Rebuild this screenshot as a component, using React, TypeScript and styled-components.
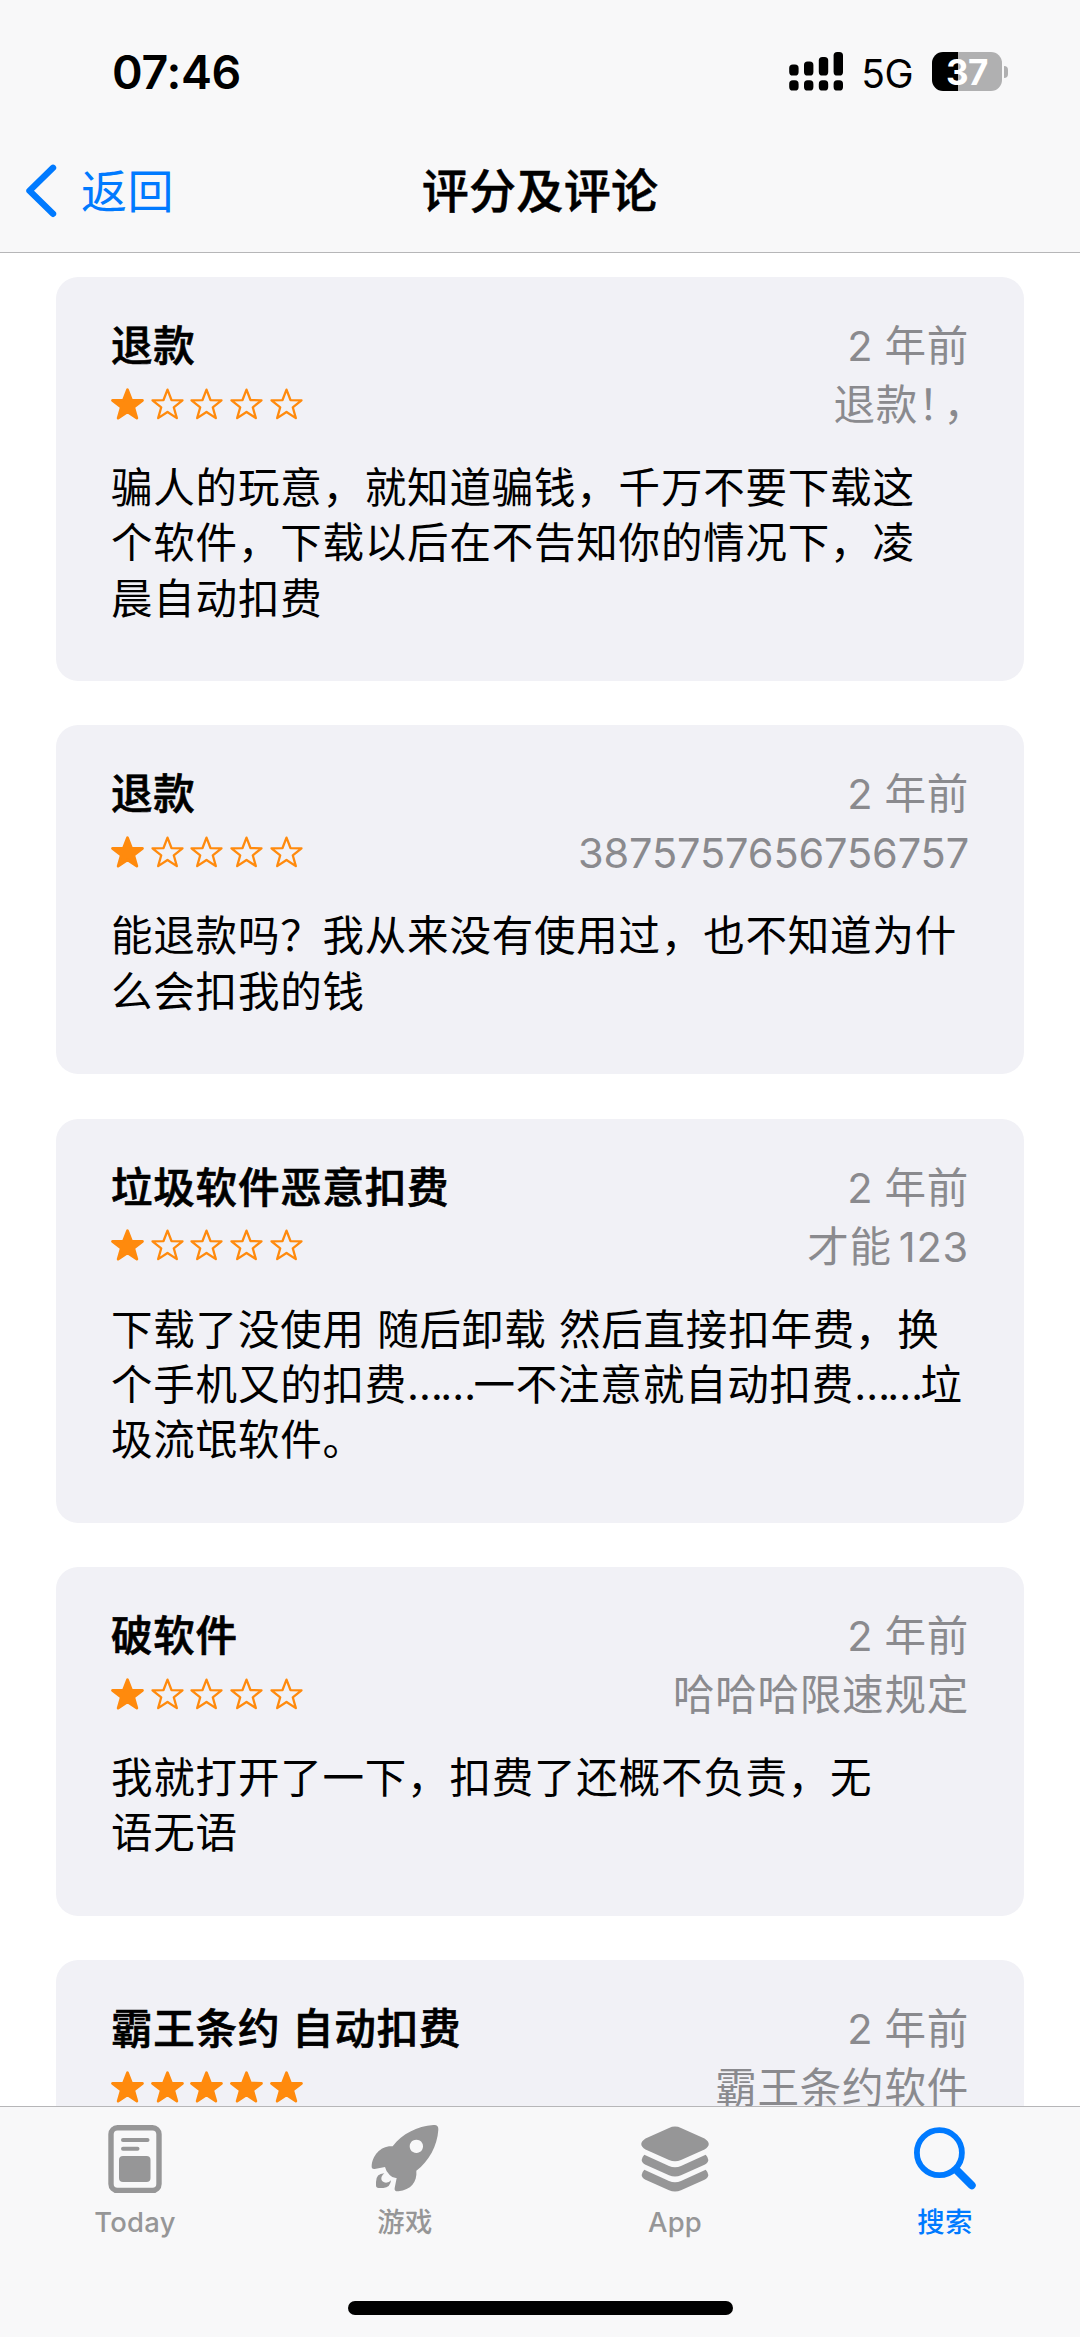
import React from 'react';
import styled, { createGlobalStyle } from 'styled-components';

const GlobalStyle = createGlobalStyle`
  * { box-sizing: border-box; }
  body {
    margin: 0;
    background: #fff;
    font-family: Inter, "Noto Sans CJK SC", sans-serif;
    text-spacing-trim: space-all;
  }
`;

const BLUE = '#007aff';
const GRAY = '#8a8a8e';
const ORANGE = '#ff8a0d';

const Screen = styled.div`
  width: 1080px;
  height: 2337px;
  display: flex;
  flex-direction: column;
  overflow: hidden;
  background: #fff;
  color: #000;
`;

const Header = styled.header`
  flex: none;
  height: 253px;
  background: #f8f8f9;
  border-bottom: 1px solid #b6b6b8;
`;

const StatusBar = styled.div`
  height: 130px;
  padding: 13px 72px 0 112px;
  display: flex;
  align-items: center;
  justify-content: space-between;
`;

const Clock = styled.span`
  font-size: 46.5px;
  font-weight: 600;
  line-height: 56px;
  letter-spacing: -0.3px;
`;

const StatusIcons = styled.div`
  display: flex;
  align-items: center;
`;

const Network = styled.span`
  margin: 4px 19px 0 18px;
  font-size: 39px;
  line-height: 44px;
  letter-spacing: -0.5px;
`;

const Battery = styled.div`
  display: flex;
  align-items: center;
  gap: 2px;
`;

const BatteryBody = styled.div<{ $level: number }>`
  width: 70px;
  height: 39px;
  border-radius: 11px;
  display: flex;
  align-items: center;
  justify-content: center;
  color: #fff;
  font-size: 35px;
  font-weight: 700;
  letter-spacing: -0.5px;
  background: linear-gradient(to right, #000 ${p => p.$level}%, #b0b0b1 ${p => p.$level}%);
`;

const BatteryTip = styled.div`
  width: 4px;
  height: 12px;
  border-radius: 0 6px 6px 0;
  background: #b0b0b1;
`;

const NavBar = styled.div`
  height: 122px;
  display: grid;
  grid-template-columns: 1fr auto 1fr;
  align-items: center;
  padding: 0 24px;
`;

const BackButton = styled.div`
  display: flex;
  align-items: center;
  gap: 23px;
  color: ${BLUE};
  font-size: 46px;
  letter-spacing: 0.4px;
  line-height: 60px;
`;

const NavTitle = styled.h1`
  margin: 0;
  font-size: 47px;
  font-weight: 500;
  line-height: 60px;
  letter-spacing: 0.3px;
  -webkit-text-stroke: 0.5px currentColor;
`;

const List = styled.main`
  flex: 1;
  min-height: 0;
  overflow: hidden;
  padding: 24px 56px 0;
  display: flex;
  flex-direction: column;
  gap: 44.6px;
`;

const Card = styled.article`
  flex: none;
  padding: 40px 55px 54px;
  border-radius: 22px;
  background: #f1f1f6;
`;

const Row = styled.div`
  height: 59px;
  display: flex;
  align-items: center;
  justify-content: space-between;
`;

const Title = styled.h2`
  margin: 0;
  font-size: 41.5px;
  font-weight: 500;
  line-height: 59px;
  letter-spacing: 0.8px;
  -webkit-text-stroke: 0.7px currentColor;
`;

const Meta = styled.span<{ $gap?: number }>`
  color: ${GRAY};
  font-size: 41.5px;
  line-height: 59px;
  letter-spacing: 0.8px;
  word-spacing: ${p => p.$gap ?? 0}px;
`;

const NumericMeta = styled(Meta)`
  letter-spacing: -0.15px;
`;

const HalfWidth = styled.span`
  font-feature-settings: "halt";
  letter-spacing: 4.7px;
`;

const Stars = styled.div`
  display: flex;
  gap: 6.7px;
  margin-bottom: 4px;
  svg { display: block; }
`;

const Body = styled.p`
  margin: 26px 0 0;
  font-size: 41.5px;
  line-height: 55.3px;
  letter-spacing: 0.8px;
  white-space: nowrap;
`;

const Line = styled.span`
  display: block;
`;

const Dots = styled.span`
  letter-spacing: -2.7px;
`;

const TabBar = styled.footer`
  flex: none;
  height: 231px;
  padding-top: 14px;
  border-top: 1px solid #b6b6b8;
  background: #f8f8f9;
  display: flex;
  flex-direction: column;
  align-items: center;
`;

const Tabs = styled.nav`
  width: 100%;
  height: 180px;
  display: grid;
  grid-template-columns: repeat(4, 1fr);
`;

const Tab = styled.div<{ $active?: boolean }>`
  display: flex;
  flex-direction: column;
  align-items: center;
  color: ${p => (p.$active ? BLUE : '#969697')};
  svg { display: block; height: 76px; }
`;

const TabLabel = styled.span`
  font-size: 27.4px;
  font-weight: 500;
  line-height: 40px;
  letter-spacing: 0.3px;
  margin-top: 5px;
`;

const HomeIndicator = styled.div`
  width: 385px;
  height: 14px;
  border-radius: 7px;
  background: #000;
`;

const STAR_POINTS =
  '16.6,1.6 20.6,12 31.7,12.3 22.9,19.3 26,30.2 16.6,24 7.2,30.2 10.3,19.3 1.5,12.3 12.6,12';

function Star({ filled }: { filled: boolean }) {
  return (
    <svg width="33" height="32" viewBox="0 0 33.2 32" overflow="visible">
      <polygon
        points={STAR_POINTS}
        fill={filled ? ORANGE : 'none'}
        stroke={ORANGE}
        strokeWidth={filled ? 2.8 : 2.3}
        strokeLinejoin="round"
      />
    </svg>
  );
}

const BARS = [64.5, 61.5, 57, 52];

function Signal() {
  return (
    <svg width="54" height="39" viewBox="790 52 54 39">
      {BARS.map((top, i) => (
        <g key={top}>
          <rect x={790.2 + i * 14.8} y={top} width="9.4" height={75.5 - top} rx="3.6" />
          <rect x={790.2 + i * 14.8} y="80.3" width="9.4" height="10.2" rx="3.6" />
        </g>
      ))}
    </svg>
  );
}

function TodayIcon() {
  return (
    <svg width="54" viewBox="0 -4 54 76" fill="currentColor">
      <rect x="3" y="2.8" width="48" height="62.6" rx="6.5" fill="none" stroke="currentColor" strokeWidth="5.4" />
      <rect x="13" y="13" width="28.5" height="4" rx="2" />
      <rect x="13" y="21.8" width="18.5" height="4" rx="2" />
      <rect x="11" y="31" width="31.5" height="26" rx="4" />
    </svg>
  );
}

function RocketIcon() {
  return (
    <svg width="70" viewBox="990 123 210 228" fill="currentColor">
      <path
        fillRule="evenodd"
        d="M1058 199C1087 161 1131 139 1180 135Q1196 133 1195 149C1192 196 1167 244 1129 272C1132 306 1113 329 1075 334Q1062 335 1064 324L1070 294Q1058 295 1049 285Q1038 275 1035 261L1004 267Q994 268 995 258C997 227 1022 196 1058 199ZM1129 179a20 20 0 1 0 .1 0Z"
      />
      <path d="M1033 280Q1008 281 1008 306V316Q1008 324 1016 324H1030Q1051 323 1053 301Q1048 308 1038 308C1022 307 1019 292 1033 280Z" />
    </svg>
  );
}

function StackIcon() {
  return (
    <svg width="68" viewBox="0 -5 68 76" fill="currentColor">
      <path d="M28 1.9Q34-.9 40 1.9L63.5 12.5Q72 18 63.5 23.5L40 34Q34 36.6 28 34L4.5 23.5Q-4 18 4.5 12.5Z" />
      <path d="M3.3 28.8L28 40Q34 42.6 40 40L64.7 28.8Q70.5 35 63.5 38.8L40 49.3Q34 51.9 28 49.3L4.5 38.8Q-2.5 35 3.3 28.8Z" />
      <path d="M3.3 43.8L28 55Q34 57.6 40 55L64.7 43.8Q70.5 50 63.5 53.8L40 64.3Q34 66.9 28 64.3L4.5 53.8Q-2.5 50 3.3 43.8Z" />
    </svg>
  );
}

function SearchIcon() {
  return (
    <svg width="62" viewBox="0 -6 62 76" fill="none" stroke="currentColor" strokeLinecap="round">
      <circle cx="25.4" cy="25.7" r="22.5" strokeWidth="5.8" />
      <path d="M42.5 43L57.7 58.3" strokeWidth="8" />
    </svg>
  );
}

interface Review {
  title: string;
  stars: number;
  author: React.ReactNode;
  numeric?: boolean;
  lines: React.ReactNode[];
}

const REVIEWS: Review[] = [
  {
    title: '退款',
    stars: 1,
    author: <>退款<HalfWidth>！，</HalfWidth></>,
    lines: ['骗人的玩意，就知道骗钱，千万不要下载这', '个软件，下载以后在不告知你的情况下，凌', '晨自动扣费'],
  },
  {
    title: '退款',
    stars: 1,
    author: '3875757656756757',
    numeric: true,
    lines: ['能退款吗？我从来没有使用过，也不知道为什', '么会扣我的钱'],
  },
  {
    title: '垃圾软件恶意扣费',
    stars: 1,
    author: '才能 123',
    lines: [
      '下载了没使用 随后卸载 然后直接扣年费，换',
      <>个手机又的扣费<Dots>……</Dots>一不注意就自动扣费<Dots>……</Dots>垃</>,
      '圾流氓软件。',
    ],
  },
  {
    title: '破软件',
    stars: 1,
    author: '哈哈哈限速规定',
    lines: ['我就打开了一下，扣费了还概不负责，无', '语无语'],
  },
  {
    title: '霸王条约 自动扣费',
    stars: 5,
    author: '霸王条约软件',
    lines: [],
  },
];

function ReviewCard({ review }: { review: Review }) {
  const Author = review.numeric ? NumericMeta : Meta;
  return (
    <Card>
      <Row>
        <Title>{review.title}</Title>
        <Meta $gap={-1.5}>2 年前</Meta>
      </Row>
      <Row>
        <Stars>
          {[1, 2, 3, 4, 5].map(n => (
            <Star key={n} filled={n <= review.stars} />
          ))}
        </Stars>
        <Author $gap={-5.5}>{review.author}</Author>
      </Row>
      <Body>
        {review.lines.map((line, i) => (
          <Line key={i}>{line}</Line>
        ))}
      </Body>
    </Card>
  );
}

export default function App() {
  return (
    <>
      <GlobalStyle />
      <Screen>
        <Header>
          <StatusBar>
            <Clock>07:46</Clock>
            <StatusIcons>
              <Signal />
              <Network>5G</Network>
              <Battery>
                <BatteryBody $level={37}>37</BatteryBody>
                <BatteryTip />
              </Battery>
            </StatusIcons>
          </StatusBar>
          <NavBar>
            <BackButton>
              <svg width="34" height="56" viewBox="24 163 34 56" fill="none">
                <path d="M53 167.8L29.5 190.8L53 213.8" stroke={BLUE} strokeWidth="6.4" strokeLinecap="round" strokeLinejoin="round" />
              </svg>
              返回
            </BackButton>
            <NavTitle>评分及评论</NavTitle>
          </NavBar>
        </Header>
        <List>
          {REVIEWS.map((review, i) => (
            <ReviewCard key={i} review={review} />
          ))}
        </List>
        <TabBar>
          <Tabs>
            <Tab><TodayIcon /><TabLabel>Today</TabLabel></Tab>
            <Tab><RocketIcon /><TabLabel>游戏</TabLabel></Tab>
            <Tab><StackIcon /><TabLabel>App</TabLabel></Tab>
            <Tab $active><SearchIcon /><TabLabel>搜索</TabLabel></Tab>
          </Tabs>
          <HomeIndicator />
        </TabBar>
      </Screen>
    </>
  );
}
